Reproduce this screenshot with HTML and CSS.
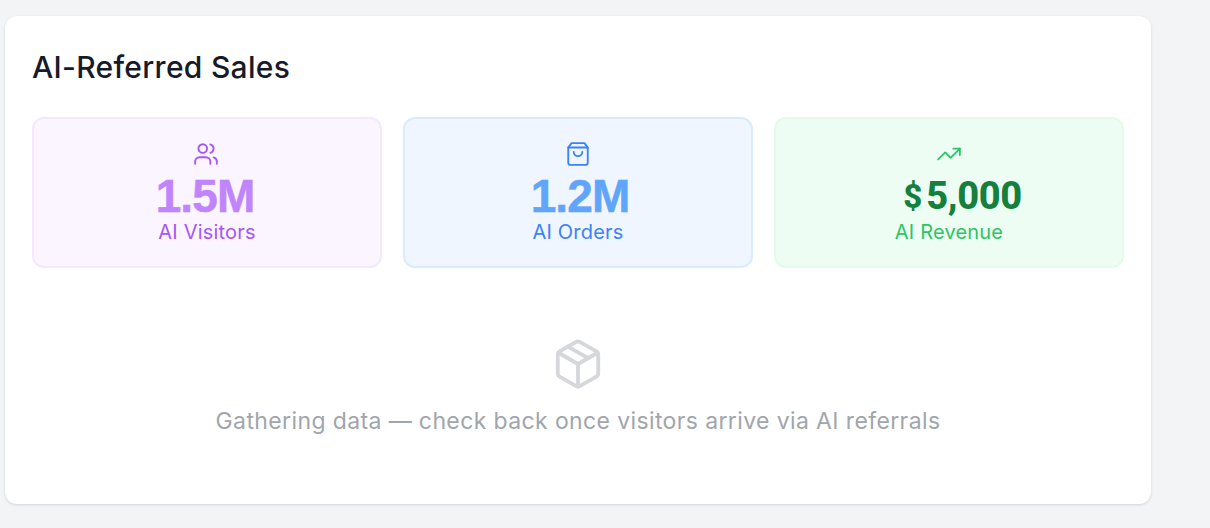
FILE: index.html
```html
<!DOCTYPE html>
<html lang="en">
<head>
    <meta charset="UTF-8">
    <meta name="viewport" content="width=device-width, initial-scale=1.0">
    <title>AI-Referred Sales</title>
    <link rel="stylesheet" href="styles.css">
</head>
<body>
    <section class="panel">
        <h2 class="panel-title">AI-Referred Sales</h2>
        <div class="stats">
            <div class="stat stat-visitors">
                <svg class="stat-icon" viewBox="0 0 24 24"><path d="M16 21v-2a4 4 0 0 0-4-4H6a4 4 0 0 0-4 4v2"/><circle cx="9" cy="7" r="4"/><path d="M22 21v-2a4 4 0 0 0-3-3.87"/><path d="M16 3.13a4 4 0 0 1 0 7.75"/></svg>
                <div class="stat-value">1.5M</div>
                <div class="stat-label">AI Visitors</div>
            </div>
            <div class="stat stat-orders">
                <svg class="stat-icon" viewBox="0 0 24 24"><path d="M6 2h12l3 4v14a2 2 0 0 1-2 2H5a2 2 0 0 1-2-2V6z"/><path d="M3 6h18"/><path d="M16 10a4 4 0 0 1-8 0"/></svg>
                <div class="stat-value">1.2M</div>
                <div class="stat-label">AI Orders</div>
            </div>
            <div class="stat stat-revenue">
                <svg class="stat-icon" viewBox="0 0 24 24"><path d="M22 7l-8.5 8.5-5-5L2 17"/><path d="M16 7h6v6"/></svg>
                <div class="stat-money"><span class="money-sign">$</span><span class="money-amount">5,000</span></div>
                <div class="stat-label">AI Revenue</div>
            </div>
        </div>
        <div class="empty">
            <svg class="empty-icon" viewBox="0 0 24 24"><path d="M21 8a2 2 0 0 0-1-1.73l-7-4a2 2 0 0 0-2 0l-7 4A2 2 0 0 0 3 8v8a2 2 0 0 0 1 1.73l7 4a2 2 0 0 0 2 0l7-4A2 2 0 0 0 21 16z"/><path d="M3.3 7L12 12l8.7-5"/><path d="M12 22V12"/><path d="M7.5 4.27l9 5.15"/></svg>
            <p class="empty-text">Gathering data — check back once visitors arrive via AI referrals</p>
        </div>
    </section>
</body>
</html>
```

FILE: styles.css
```css
body {
    margin: 0;
    padding: 16px 59px 24px 5px;
    background-color: #f3f4f6;
    font-family: Inter, 'Liberation Sans', sans-serif;
}
.panel {
    height: 488px;
    box-sizing: border-box;
    padding: 28px 27px;
    background-color: #fff;
    border-radius: 12px;
    box-shadow: 0 1px 3px rgba(0, 0, 0, 0.13);
}
.panel-title {
    margin: 0 0 27px;
    font-size: 30px;
    line-height: 46px;
    font-weight: 450;
    letter-spacing: 0.3px;
    color: #171a2b;
}
.stats {
    display: grid;
    grid-template-columns: repeat(3, 1fr);
    gap: 21px;
}
.stat {
    height: 151px;
    box-sizing: border-box;
    padding-top: 22px;
    display: flex;
    flex-direction: column;
    align-items: center;
    border: 2px solid;
    border-radius: 12px;
}
.stat-icon {
    width: 26px;
    height: 26px;
    fill: none;
    stroke: currentColor;
    stroke-width: 1.7;
    stroke-linecap: round;
    stroke-linejoin: round;
}
.stat-value {
    margin: 6px 0 -2px;
    font-family: 'Liberation Sans', Arial, sans-serif;
    font-size: 46px;
    line-height: 46px;
    font-weight: 700;
    letter-spacing: -0.9px;
    -webkit-text-stroke: 0.5px currentColor;
}
.stat-label {
    font-size: 20px;
    line-height: 30px;
    letter-spacing: 0.2px;
}
.stat-visitors {
    background-color: #faf5ff;
    border-color: #f3e8ff;
    color: #a855f7;
}
.stat-visitors .stat-icon {
    margin-right: 2px;
}
.stat-visitors .stat-value {
    margin-right: 4px;
    color: #c084fc;
}
.stat-orders {
    background-color: #eff6ff;
    border-color: #dbeafe;
    color: #3b82f6;
}
.stat-orders .stat-value {
    margin-left: 4px;
    color: #60a5fa;
}
.stat-revenue {
    background-color: #edfdf3;
    border-color: #e4fbeb;
    color: #2cc565;
}
.stat-money {
    display: flex;
    align-items: center;
    gap: 4px;
    height: 46px;
    margin: 6px 0 -2px 27px;
    color: #15803d;
    font-family: Roboto, sans-serif;
    font-weight: 800;
}
.money-sign {
    font-size: 33px;
}
.money-amount {
    font-size: 38px;
    letter-spacing: -0.4px;
}
.empty {
    display: flex;
    flex-direction: column;
    align-items: center;
    margin-top: 69px;
}
.empty-icon {
    width: 54px;
    height: 54px;
    fill: none;
    stroke: #d5d7da;
    stroke-width: 1.7;
    stroke-linecap: round;
    stroke-linejoin: round;
}
.empty-text {
    margin: 14px 0 0;
    font-size: 23px;
    line-height: 32px;
    letter-spacing: 0.38px;
    color: #a1a5ac;
}
```
